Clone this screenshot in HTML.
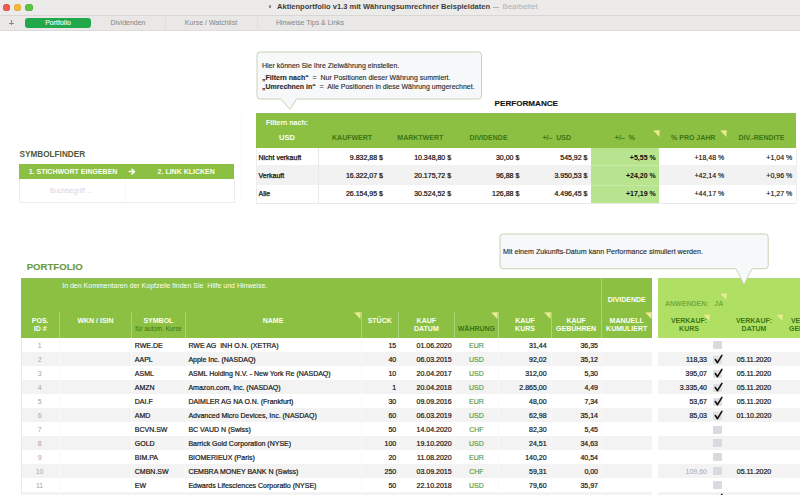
<!DOCTYPE html>
<html><head><meta charset="utf-8"><style>
html,body{margin:0;padding:0;width:800px;height:495px;overflow:hidden;background:#fff;font-family:"Liberation Sans",sans-serif;}
.t{position:absolute;white-space:nowrap;}
.r{position:absolute;}
</style></head><body>
<div class="r" style="left:0px;top:0px;width:800.00px;height:15.00px;background:#ecebe9;"></div>
<div class="r" style="left:0px;top:15px;width:800.00px;height:0.70px;background:#d9d7d5;"></div>
<div class="r" style="left:0px;top:15.7px;width:800.00px;height:14.30px;background:#e9e8e6;"></div>
<div class="r" style="left:0px;top:30px;width:800.00px;height:0.80px;background:#dedcda;"></div>
<div class="r" style="left:2.6999999999999997px;top:3.6px;width:7.2px;height:7.2px;border-radius:50%;background:#ee5b53;box-shadow:inset 0 0 0 0.5px #d8463f"></div>
<div class="r" style="left:14.200000000000001px;top:3.6px;width:7.2px;height:7.2px;border-radius:50%;background:#f6b83a;box-shadow:inset 0 0 0 0.5px #dca02c"></div>
<div class="r" style="left:25.4px;top:3.6px;width:7.2px;height:7.2px;border-radius:50%;background:#5ac544;box-shadow:inset 0 0 0 0.5px #48a935"></div>
<div class="r" style="left:268.6px;top:5.4px;width:2.80px;height:2.80px;background:#8a8a8a;border-radius:0.5px;"></div>
<div class="t" style="left:277px;top:2.47px;font-size:7.55px;line-height:9.06px;font-weight:bold;color:#3c3c3c;">Aktienportfolio v1.3 mit Währungsumrechner Beispieldaten</div>
<div class="r" style="left:493px;top:6.9px;width:6.00px;height:0.90px;background:#b4b4b4;"></div>
<div class="t" style="left:502.5px;top:2.38px;font-size:7.7px;line-height:9.24px;font-weight:normal;color:#b0b0b0;">Bearbeitet</div>
<div class="r" style="left:9.2px;top:22.5px;width:4.60px;height:0.70px;background:#858585;"></div>
<div class="r" style="left:11.15px;top:20.3px;width:0.70px;height:4.90px;background:#858585;"></div>
<div class="r" style="left:25px;top:17.5px;width:66px;height:10.5px;border-radius:3px;background:#22a74b"></div>
<div class="t" style="left:-92px;width:300px;text-align:center;top:18.90px;font-size:7px;line-height:8.40px;font-weight:normal;color:#eaf8ec;-webkit-text-stroke:0.15px #eaf8ec;">Portfolio</div>
<div class="t" style="left:-22px;width:300px;text-align:center;top:19.10px;font-size:7px;line-height:8.40px;font-weight:normal;color:#858585;">Dividenden</div>
<div class="r" style="left:165px;top:17px;width:0.50px;height:12.00px;background:#e0dedc;"></div>
<div class="t" style="left:61px;width:300px;text-align:center;top:19.10px;font-size:7px;line-height:8.40px;font-weight:normal;color:#858585;">Kurse / Watchlist</div>
<div class="r" style="left:257px;top:17px;width:0.50px;height:12.00px;background:#e0dedc;"></div>
<div class="t" style="left:160px;width:300px;text-align:center;top:19.10px;font-size:7px;line-height:8.40px;font-weight:normal;color:#858585;">Hinweise Tips &amp; Links</div>
<svg class="r" style="left:255.5px;top:51px" width="226.5" height="59.5"><path d="M4 1 H222.5 Q225.5 1 225.5 4 V45 Q225.5 48 222.5 48 H40.5 L34.0 58.5 L25.0 48 H4 Q1 48 1 45 V4 Q1 1 4 1 Z" fill="#f7f8fa" stroke="#c6d4b4" stroke-width="1"/></svg>
<div class="t" style="left:262px;top:62.10px;font-size:7px;line-height:8.40px;font-weight:normal;color:#2a2a2a;-webkit-text-stroke:0.12px #2a2a2a;">Hier können Sie Ihre Zielwährung einstellen.</div>
<div class="t" style="left:262px;top:73.70px;font-size:7px;line-height:8.40px;font-weight:normal;color:#2a2a2a;-webkit-text-stroke:0.12px #2a2a2a;"><b>„Filtern nach“</b>&nbsp; =&nbsp; Nur Positionen dieser Währung summiert.</div>
<div class="t" style="left:262px;top:83.10px;font-size:7px;line-height:8.40px;font-weight:normal;color:#2a2a2a;-webkit-text-stroke:0.12px #2a2a2a;"><b>„Umrechnen in“</b>&nbsp; =&nbsp; Alle Positionen in diese Währung umgerechnet.</div>
<div class="t" style="left:494.6px;top:98.74px;font-size:8.1px;line-height:9.72px;font-weight:bold;color:#111;-webkit-text-stroke:0.12px #111;">PERFORMANCE</div>
<div class="r" style="left:256px;top:112.5px;width:539.50px;height:35.80px;background:#8bc043;"></div>
<div class="r" style="left:256px;top:112.5px;width:539.50px;height:1.00px;background:#90b85c;"></div>
<div class="t" style="left:266px;top:118.80px;font-size:7px;line-height:8.40px;font-weight:bold;color:#fbfff5;">Filtern nach:</div>
<div class="t" style="left:137px;width:300px;text-align:center;top:133.30px;font-size:7.5px;line-height:9.00px;font-weight:bold;color:#fbfff5;">USD</div>
<div class="t" style="left:202.10000000000002px;width:300px;text-align:center;top:133.60px;font-size:7px;line-height:8.40px;font-weight:bold;color:#3d7513;">KAUFWERT</div>
<div class="t" style="left:270.29999999999995px;width:300px;text-align:center;top:133.60px;font-size:7px;line-height:8.40px;font-weight:bold;color:#3d7513;">MARKTWERT</div>
<div class="t" style="left:338.5px;width:300px;text-align:center;top:133.60px;font-size:7px;line-height:8.40px;font-weight:bold;color:#3d7513;">DIVIDENDE</div>
<div class="t" style="left:406.70000000000005px;width:300px;text-align:center;top:133.60px;font-size:7px;line-height:8.40px;font-weight:bold;color:#3d7513;">+/–&nbsp; USD</div>
<div class="t" style="left:474.9px;width:300px;text-align:center;top:133.60px;font-size:7px;line-height:8.40px;font-weight:bold;color:#3d7513;">+/–&nbsp; %</div>
<div class="t" style="left:543.25px;width:300px;text-align:center;top:133.60px;font-size:7px;line-height:8.40px;font-weight:bold;color:#3d7513;">% PRO JAHR</div>
<div class="t" style="left:611.5px;width:300px;text-align:center;top:133.60px;font-size:7px;line-height:8.40px;font-weight:bold;color:#3d7513;">DIV.-RENDITE</div>
<svg class="r" style="left:653px;top:129.5px" width="7" height="7"><path d="M0 0.3 L6.7 0 L6.4 7 Z" fill="#eaec90"/><path d="M0 0.3 L6.7 0" stroke="#b4b25a" stroke-width="0.8" opacity="0.6"/></svg>
<svg class="r" style="left:720px;top:129.5px" width="7" height="7"><path d="M0 0.3 L6.7 0 L6.4 7 Z" fill="#eaec90"/><path d="M0 0.3 L6.7 0" stroke="#b4b25a" stroke-width="0.8" opacity="0.6"/></svg>
<div class="r" style="left:256px;top:148.3px;width:539.50px;height:16.70px;background:#ffffff;"></div>
<div class="r" style="left:590.8px;top:148.3px;width:68.20px;height:16.70px;background:#b8e38f;"></div>
<div class="t" style="left:258.5px;top:153.60px;font-size:7px;line-height:8.40px;font-weight:normal;color:#111;-webkit-text-stroke:0.25px #111;">Nicht verkauft</div>
<div class="t" style="right:417.1px;top:153.60px;font-size:7px;line-height:8.40px;font-weight:normal;color:#111;-webkit-text-stroke:0.22px #111;">9.832,88 $</div>
<div class="t" style="right:348.90000000000003px;top:153.60px;font-size:7px;line-height:8.40px;font-weight:normal;color:#111;-webkit-text-stroke:0.22px #111;">10.348,80 $</div>
<div class="t" style="right:280.69999999999993px;top:153.60px;font-size:7px;line-height:8.40px;font-weight:normal;color:#111;-webkit-text-stroke:0.22px #111;">30,00 $</div>
<div class="t" style="right:212.5px;top:153.60px;font-size:7px;line-height:8.40px;font-weight:normal;color:#111;-webkit-text-stroke:0.22px #111;">545,92 $</div>
<div class="t" style="right:144.29999999999995px;top:153.60px;font-size:7px;line-height:8.40px;font-weight:bold;color:#0a0a0a;">+5,55 %</div>
<div class="t" style="right:75.79999999999995px;top:153.60px;font-size:7px;line-height:8.40px;font-weight:normal;color:#111;-webkit-text-stroke:0.15px #111;">+18,48 %</div>
<div class="t" style="right:7.7999999999999545px;top:153.60px;font-size:7px;line-height:8.40px;font-weight:normal;color:#111;-webkit-text-stroke:0.15px #111;">+1,04 %</div>
<div class="r" style="left:256px;top:165.0px;width:539.50px;height:19.80px;background:#f2f2f2;"></div>
<div class="r" style="left:590.8px;top:165.0px;width:68.20px;height:19.80px;background:#b8e38f;"></div>
<div class="t" style="left:258.5px;top:172.20px;font-size:7px;line-height:8.40px;font-weight:normal;color:#111;-webkit-text-stroke:0.25px #111;">Verkauft</div>
<div class="t" style="right:417.1px;top:172.20px;font-size:7px;line-height:8.40px;font-weight:normal;color:#111;-webkit-text-stroke:0.22px #111;">16.322,07 $</div>
<div class="t" style="right:348.90000000000003px;top:172.20px;font-size:7px;line-height:8.40px;font-weight:normal;color:#111;-webkit-text-stroke:0.22px #111;">20.175,72 $</div>
<div class="t" style="right:280.69999999999993px;top:172.20px;font-size:7px;line-height:8.40px;font-weight:normal;color:#111;-webkit-text-stroke:0.22px #111;">96,88 $</div>
<div class="t" style="right:212.5px;top:172.20px;font-size:7px;line-height:8.40px;font-weight:normal;color:#111;-webkit-text-stroke:0.22px #111;">3.950,53 $</div>
<div class="t" style="right:144.29999999999995px;top:172.20px;font-size:7px;line-height:8.40px;font-weight:bold;color:#0a0a0a;">+24,20 %</div>
<div class="t" style="right:75.79999999999995px;top:172.20px;font-size:7px;line-height:8.40px;font-weight:normal;color:#111;-webkit-text-stroke:0.15px #111;">+42,14 %</div>
<div class="t" style="right:7.7999999999999545px;top:172.20px;font-size:7px;line-height:8.40px;font-weight:normal;color:#111;-webkit-text-stroke:0.15px #111;">+0,96 %</div>
<div class="r" style="left:256px;top:184.8px;width:539.50px;height:18.20px;background:#ffffff;"></div>
<div class="r" style="left:590.8px;top:184.8px;width:68.20px;height:18.20px;background:#b8e38f;"></div>
<div class="t" style="left:258.5px;top:190.40px;font-size:7px;line-height:8.40px;font-weight:normal;color:#111;-webkit-text-stroke:0.25px #111;">Alle</div>
<div class="t" style="right:417.1px;top:190.40px;font-size:7px;line-height:8.40px;font-weight:normal;color:#111;-webkit-text-stroke:0.22px #111;">26.154,95 $</div>
<div class="t" style="right:348.90000000000003px;top:190.40px;font-size:7px;line-height:8.40px;font-weight:normal;color:#111;-webkit-text-stroke:0.22px #111;">30.524,52 $</div>
<div class="t" style="right:280.69999999999993px;top:190.40px;font-size:7px;line-height:8.40px;font-weight:normal;color:#111;-webkit-text-stroke:0.22px #111;">126,88 $</div>
<div class="t" style="right:212.5px;top:190.40px;font-size:7px;line-height:8.40px;font-weight:normal;color:#111;-webkit-text-stroke:0.22px #111;">4.496,45 $</div>
<div class="t" style="right:144.29999999999995px;top:190.40px;font-size:7px;line-height:8.40px;font-weight:bold;color:#0a0a0a;">+17,19 %</div>
<div class="t" style="right:75.79999999999995px;top:190.40px;font-size:7px;line-height:8.40px;font-weight:normal;color:#111;-webkit-text-stroke:0.15px #111;">+44,17 %</div>
<div class="t" style="right:7.7999999999999545px;top:190.40px;font-size:7px;line-height:8.40px;font-weight:normal;color:#111;-webkit-text-stroke:0.15px #111;">+1,27 %</div>
<div class="r" style="left:317.6px;top:148.3px;width:0.50px;height:54.70px;background:#e8e8e8;"></div>
<div class="r" style="left:256px;top:203px;width:539.50px;height:0.80px;background:#e9e9e9;"></div>
<div class="r" style="left:255.5px;top:148.3px;width:0.50px;height:55.20px;background:#ededed;"></div>
<div class="r" style="left:795.5px;top:148.3px;width:0.50px;height:55.20px;background:#ededed;"></div>
<div class="r" style="left:591px;top:164.8px;width:68.00px;height:0.50px;background:#c8e9aa;"></div>
<div class="r" style="left:591px;top:184.6px;width:68.00px;height:0.50px;background:#c8e9aa;"></div>
<div class="r" style="left:241px;top:113px;width:0.50px;height:89.00px;background:#f8f8f8;"></div>
<div class="t" style="left:19.6px;top:149.88px;font-size:8.2px;line-height:9.84px;font-weight:bold;color:#4b5a38;">SYMBOLFINDER</div>
<div class="r" style="left:19.3px;top:164px;width:214.70px;height:14.70px;background:#8bc043;"></div>
<div class="t" style="left:28.7px;top:168.20px;font-size:7px;line-height:8.40px;font-weight:bold;color:#fbfff5;">1. STICHWORT EINGEBEN</div>
<svg class="r" style="left:127.8px;top:167.2px" width="10" height="10"><path d="M1.2 4.6 H5.2 M3.9 2.2 L6.5 4.6 L3.9 7" fill="none" stroke="#fbfff5" stroke-width="1.5" stroke-linecap="round" stroke-linejoin="round"/></svg>
<div class="t" style="left:157.6px;top:168.20px;font-size:7px;line-height:8.40px;font-weight:bold;color:#fbfff5;">2. LINK KLICKEN</div>
<div class="r" style="left:19.3px;top:178.7px;width:214.2px;height:23.1px;border:0.5px solid #ececec;border-top:none;background:#fff"></div>
<div class="r" style="left:125.2px;top:178.7px;width:0.50px;height:22.80px;background:#f8f8f8;"></div>
<div class="t" style="left:49.7px;top:187.10px;font-size:7px;line-height:8.40px;font-weight:normal;color:#d6d6dc;">Buchbegriff ...</div>
<div class="t" style="left:26.7px;top:261.24px;font-size:9.6px;line-height:11.52px;font-weight:bold;color:#6b9a3e;-webkit-text-stroke:0.12px #6b9a3e;">PORTFOLIO</div>
<div class="r" style="left:20.9px;top:278.2px;width:631.50px;height:60.20px;background:#8bc043;"></div>
<div class="r" style="left:658.4px;top:278.2px;width:141.60px;height:60.20px;background:#afe063;"></div>
<div class="r" style="left:20.9px;top:278.2px;width:631.50px;height:0.80px;background:#93bb5e;"></div>
<div class="r" style="left:658.4px;top:278.2px;width:141.60px;height:0.80px;background:#b0d77a;"></div>
<div class="t" style="left:62.2px;top:282.20px;font-size:7px;line-height:8.40px;font-weight:normal;color:#fbfff5;">In den Kommentaren der Kopfzeile finden Sie&nbsp; Hilfe und Hinweise.</div>
<div class="r" style="left:59.25px;top:312px;width:0.50px;height:26.40px;background:#a8d67a;"></div>
<div class="r" style="left:131.25px;top:312px;width:0.50px;height:26.40px;background:#a8d67a;"></div>
<div class="r" style="left:185.05px;top:312px;width:0.50px;height:26.40px;background:#a8d67a;"></div>
<div class="r" style="left:360.55px;top:312px;width:0.50px;height:26.40px;background:#a8d67a;"></div>
<div class="r" style="left:398.35px;top:312px;width:0.50px;height:26.40px;background:#a8d67a;"></div>
<div class="r" style="left:453.85px;top:312px;width:0.50px;height:26.40px;background:#a8d67a;"></div>
<div class="r" style="left:498.45px;top:312px;width:0.50px;height:26.40px;background:#a8d67a;"></div>
<div class="r" style="left:551.05px;top:312px;width:0.50px;height:26.40px;background:#a8d67a;"></div>
<div class="r" style="left:600.75px;top:278.2px;width:0.50px;height:60.20px;background:#a8d67a;"></div>
<div class="t" style="left:-109.8px;width:300px;text-align:center;top:317.10px;font-size:7px;line-height:8.40px;font-weight:bold;color:#fbfff5;">POS.</div>
<div class="t" style="left:-109.8px;width:300px;text-align:center;top:325.00px;font-size:7px;line-height:8.40px;font-weight:bold;color:#fbfff5;">ID #</div>
<div class="t" style="left:-54.5px;width:300px;text-align:center;top:317.10px;font-size:7px;line-height:8.40px;font-weight:bold;color:#fbfff5;">WKN / ISIN</div>
<div class="t" style="left:8.400000000000006px;width:300px;text-align:center;top:317.10px;font-size:7px;line-height:8.40px;font-weight:bold;color:#fbfff5;">SYMBOL</div>
<div class="t" style="left:8.599999999999994px;width:300px;text-align:center;top:325.42px;font-size:6.3px;line-height:7.56px;font-weight:normal;color:#3d7513;">für autom. Kurse</div>
<div class="t" style="left:123.05000000000001px;width:300px;text-align:center;top:317.10px;font-size:7px;line-height:8.40px;font-weight:bold;color:#fbfff5;">NAME</div>
<div class="t" style="left:229.70000000000005px;width:300px;text-align:center;top:317.10px;font-size:7px;line-height:8.40px;font-weight:bold;color:#fbfff5;">STÜCK</div>
<div class="t" style="left:276.35px;width:300px;text-align:center;top:317.10px;font-size:7px;line-height:8.40px;font-weight:bold;color:#fbfff5;">KAUF</div>
<div class="t" style="left:276.35px;width:300px;text-align:center;top:325.00px;font-size:7px;line-height:8.40px;font-weight:bold;color:#fbfff5;">DATUM</div>
<div class="t" style="left:326.4px;width:300px;text-align:center;top:325.00px;font-size:7px;line-height:8.40px;font-weight:bold;color:#3d7513;">WÄHRUNG</div>
<div class="t" style="left:375.0px;width:300px;text-align:center;top:317.10px;font-size:7px;line-height:8.40px;font-weight:bold;color:#fbfff5;">KAUF</div>
<div class="t" style="left:375.0px;width:300px;text-align:center;top:325.00px;font-size:7px;line-height:8.40px;font-weight:bold;color:#fbfff5;">KURS</div>
<div class="t" style="left:426.15px;width:300px;text-align:center;top:317.10px;font-size:7px;line-height:8.40px;font-weight:bold;color:#fbfff5;">KAUF</div>
<div class="t" style="left:426.15px;width:300px;text-align:center;top:325.00px;font-size:7px;line-height:8.40px;font-weight:bold;color:#fbfff5;">GEBÜHREN</div>
<div class="t" style="left:476.70000000000005px;width:300px;text-align:center;top:296.10px;font-size:7px;line-height:8.40px;font-weight:bold;color:#fbfff5;">DIVIDENDE</div>
<div class="t" style="left:476.70000000000005px;width:300px;text-align:center;top:317.10px;font-size:7px;line-height:8.40px;font-weight:bold;color:#fbfff5;">MANUELL</div>
<div class="t" style="left:476.70000000000005px;width:300px;text-align:center;top:325.00px;font-size:7px;line-height:8.40px;font-weight:bold;color:#fbfff5;">KUMULIERT</div>
<svg class="r" style="left:353.5px;top:312.3px" width="7" height="7"><path d="M0 0.3 L6.7 0 L6.4 7 Z" fill="#eaec90"/><path d="M0 0.3 L6.7 0" stroke="#b4b25a" stroke-width="0.8" opacity="0.6"/></svg>
<svg class="r" style="left:490.8px;top:312.3px" width="7" height="7"><path d="M0 0.3 L6.7 0 L6.4 7 Z" fill="#eaec90"/><path d="M0 0.3 L6.7 0" stroke="#b4b25a" stroke-width="0.8" opacity="0.6"/></svg>
<svg class="r" style="left:543.5px;top:312.3px" width="7" height="7"><path d="M0 0.3 L6.7 0 L6.4 7 Z" fill="#eaec90"/><path d="M0 0.3 L6.7 0" stroke="#b4b25a" stroke-width="0.8" opacity="0.6"/></svg>
<svg class="r" style="left:645px;top:312.3px" width="7" height="7"><path d="M0 0.3 L6.7 0 L6.4 7 Z" fill="#eaec90"/><path d="M0 0.3 L6.7 0" stroke="#b4b25a" stroke-width="0.8" opacity="0.6"/></svg>
<div class="t" style="left:665px;top:299.60px;font-size:7px;line-height:8.40px;font-weight:bold;color:#72ac3e;">ANWENDEN:</div>
<div class="t" style="left:714.3px;top:299.60px;font-size:7px;line-height:8.40px;font-weight:bold;color:#72ac3e;">JA</div>
<svg class="r" style="left:719.5px;top:293px" width="7" height="7"><path d="M0 0.3 L6.7 0 L6.4 7 Z" fill="#eaec90"/><path d="M0 0.3 L6.7 0" stroke="#b4b25a" stroke-width="0.8" opacity="0.6"/></svg>
<div class="t" style="left:539px;width:300px;text-align:center;top:317.10px;font-size:7px;line-height:8.40px;font-weight:bold;color:#3d7513;">VERKAUF:</div>
<div class="t" style="left:539px;width:300px;text-align:center;top:325.00px;font-size:7px;line-height:8.40px;font-weight:bold;color:#3d7513;">KURS</div>
<div class="t" style="left:604px;width:300px;text-align:center;top:317.10px;font-size:7px;line-height:8.40px;font-weight:bold;color:#3d7513;">VERKAUF:</div>
<div class="t" style="left:604px;width:300px;text-align:center;top:325.00px;font-size:7px;line-height:8.40px;font-weight:bold;color:#3d7513;">DATUM</div>
<div class="t" style="left:659px;width:300px;text-align:center;top:317.10px;font-size:7px;line-height:8.40px;font-weight:bold;color:#3d7513;">VERKAUF:</div>
<div class="t" style="left:659px;width:300px;text-align:center;top:325.00px;font-size:7px;line-height:8.40px;font-weight:bold;color:#3d7513;">GEBÜHREN</div>
<svg class="r" style="left:703px;top:313.5px" width="7" height="7"><path d="M0 0.3 L6.7 0 L6.4 7 Z" fill="#eaec90"/><path d="M0 0.3 L6.7 0" stroke="#b4b25a" stroke-width="0.8" opacity="0.6"/></svg>
<svg class="r" style="left:776px;top:313.5px" width="7" height="7"><path d="M0 0.3 L6.7 0 L6.4 7 Z" fill="#eaec90"/><path d="M0 0.3 L6.7 0" stroke="#b4b25a" stroke-width="0.8" opacity="0.6"/></svg>
<div class="t" style="left:-110.4px;width:300px;text-align:center;top:341.60px;font-size:7px;line-height:8.40px;font-weight:normal;color:#a4a4a4;">1</div>
<div class="t" style="left:134.8px;top:341.60px;font-size:7px;line-height:8.40px;font-weight:normal;color:#161616;-webkit-text-stroke:0.2px #161616;">RWE.DE</div>
<div class="t" style="left:188.4px;top:341.60px;font-size:7px;line-height:8.40px;font-weight:normal;color:#161616;-webkit-text-stroke:0.2px #161616;">RWE AG&nbsp; INH O.N. (XETRA)</div>
<div class="t" style="right:403.8px;top:341.60px;font-size:7px;line-height:8.40px;font-weight:normal;color:#161616;-webkit-text-stroke:0.2px #161616;">15</div>
<div class="t" style="right:348.4px;top:341.60px;font-size:7px;line-height:8.40px;font-weight:normal;color:#161616;-webkit-text-stroke:0.2px #161616;">01.06.2020</div>
<div class="t" style="left:326.4px;width:300px;text-align:center;top:341.60px;font-size:7px;line-height:8.40px;font-weight:normal;color:#5c9936;-webkit-text-stroke:0.15px #5c9936;">EUR</div>
<div class="t" style="right:253.39999999999998px;top:341.60px;font-size:7px;line-height:8.40px;font-weight:normal;color:#161616;-webkit-text-stroke:0.2px #161616;">31,44</div>
<div class="t" style="right:202px;top:341.60px;font-size:7px;line-height:8.40px;font-weight:normal;color:#161616;-webkit-text-stroke:0.2px #161616;">36,35</div>
<div class="r" style="left:713.1px;top:341.20px;width:8.5px;height:8px;border-radius:1px;background:#d8dae0"></div>
<div class="r" style="left:20.9px;top:351.5px;width:631.50px;height:14.80px;background:#f3f3f3;"></div>
<div class="r" style="left:658.4px;top:351.5px;width:141.60px;height:14.80px;background:#f3f3f3;"></div>
<div class="t" style="left:-110.4px;width:300px;text-align:center;top:356.30px;font-size:7px;line-height:8.40px;font-weight:normal;color:#a4a4a4;">2</div>
<div class="t" style="left:134.8px;top:356.30px;font-size:7px;line-height:8.40px;font-weight:normal;color:#161616;-webkit-text-stroke:0.2px #161616;">AAPL</div>
<div class="t" style="left:188.4px;top:356.30px;font-size:7px;line-height:8.40px;font-weight:normal;color:#161616;-webkit-text-stroke:0.2px #161616;">Apple Inc. (NASDAQ)</div>
<div class="t" style="right:403.8px;top:356.30px;font-size:7px;line-height:8.40px;font-weight:normal;color:#161616;-webkit-text-stroke:0.2px #161616;">40</div>
<div class="t" style="right:348.4px;top:356.30px;font-size:7px;line-height:8.40px;font-weight:normal;color:#161616;-webkit-text-stroke:0.2px #161616;">06.03.2015</div>
<div class="t" style="left:326.4px;width:300px;text-align:center;top:356.30px;font-size:7px;line-height:8.40px;font-weight:normal;color:#5c9936;-webkit-text-stroke:0.15px #5c9936;">USD</div>
<div class="t" style="right:253.39999999999998px;top:356.30px;font-size:7px;line-height:8.40px;font-weight:normal;color:#161616;-webkit-text-stroke:0.2px #161616;">92,02</div>
<div class="t" style="right:202px;top:356.30px;font-size:7px;line-height:8.40px;font-weight:normal;color:#161616;-webkit-text-stroke:0.2px #161616;">35,12</div>
<div class="t" style="right:93px;top:356.30px;font-size:7px;line-height:8.40px;font-weight:normal;color:#161616;-webkit-text-stroke:0.2px #161616;">118,33</div>
<div class="t" style="left:604px;width:300px;text-align:center;top:356.30px;font-size:7px;line-height:8.40px;font-weight:normal;color:#161616;-webkit-text-stroke:0.2px #161616;">05.11.2020</div>
<div class="r" style="left:713.1px;top:355.90px;width:8.5px;height:8px;border-radius:1px;background:#e0e0e2"></div>
<svg class="r" style="left:711px;top:352.90px" width="14" height="14"><path d="M4.3 6.5 L6.5 9.7 L10.9 2.3" fill="none" stroke="#0d0d0d" stroke-width="1.55" stroke-linecap="round" stroke-linejoin="round"/></svg>
<div class="t" style="left:-110.4px;width:300px;text-align:center;top:370.23px;font-size:7px;line-height:8.40px;font-weight:normal;color:#a4a4a4;">3</div>
<div class="t" style="left:134.8px;top:370.23px;font-size:7px;line-height:8.40px;font-weight:normal;color:#161616;-webkit-text-stroke:0.2px #161616;">ASML</div>
<div class="t" style="left:188.4px;top:370.23px;font-size:7px;line-height:8.40px;font-weight:normal;color:#161616;-webkit-text-stroke:0.2px #161616;">ASML Holding N.V. - New York Re (NASDAQ)</div>
<div class="t" style="right:403.8px;top:370.23px;font-size:7px;line-height:8.40px;font-weight:normal;color:#161616;-webkit-text-stroke:0.2px #161616;">10</div>
<div class="t" style="right:348.4px;top:370.23px;font-size:7px;line-height:8.40px;font-weight:normal;color:#161616;-webkit-text-stroke:0.2px #161616;">20.04.2017</div>
<div class="t" style="left:326.4px;width:300px;text-align:center;top:370.23px;font-size:7px;line-height:8.40px;font-weight:normal;color:#5c9936;-webkit-text-stroke:0.15px #5c9936;">USD</div>
<div class="t" style="right:253.39999999999998px;top:370.23px;font-size:7px;line-height:8.40px;font-weight:normal;color:#161616;-webkit-text-stroke:0.2px #161616;">312,00</div>
<div class="t" style="right:202px;top:370.23px;font-size:7px;line-height:8.40px;font-weight:normal;color:#161616;-webkit-text-stroke:0.2px #161616;">5,30</div>
<div class="t" style="right:93px;top:370.23px;font-size:7px;line-height:8.40px;font-weight:normal;color:#161616;-webkit-text-stroke:0.2px #161616;">395,07</div>
<div class="t" style="left:604px;width:300px;text-align:center;top:370.23px;font-size:7px;line-height:8.40px;font-weight:normal;color:#161616;-webkit-text-stroke:0.2px #161616;">05.11.2020</div>
<div class="r" style="left:713.1px;top:369.83px;width:8.5px;height:8px;border-radius:1px;background:#e0e0e2"></div>
<svg class="r" style="left:711px;top:366.83px" width="14" height="14"><path d="M4.3 6.5 L6.5 9.7 L10.9 2.3" fill="none" stroke="#0d0d0d" stroke-width="1.55" stroke-linecap="round" stroke-linejoin="round"/></svg>
<div class="r" style="left:20.9px;top:379.54px;width:631.50px;height:14.80px;background:#f3f3f3;"></div>
<div class="r" style="left:658.4px;top:379.54px;width:141.60px;height:14.80px;background:#f3f3f3;"></div>
<div class="t" style="left:-110.4px;width:300px;text-align:center;top:384.16px;font-size:7px;line-height:8.40px;font-weight:normal;color:#a4a4a4;">4</div>
<div class="t" style="left:134.8px;top:384.16px;font-size:7px;line-height:8.40px;font-weight:normal;color:#161616;-webkit-text-stroke:0.2px #161616;">AMZN</div>
<div class="t" style="left:188.4px;top:384.16px;font-size:7px;line-height:8.40px;font-weight:normal;color:#161616;-webkit-text-stroke:0.2px #161616;">Amazon.com, Inc. (NASDAQ)</div>
<div class="t" style="right:403.8px;top:384.16px;font-size:7px;line-height:8.40px;font-weight:normal;color:#161616;-webkit-text-stroke:0.2px #161616;">1</div>
<div class="t" style="right:348.4px;top:384.16px;font-size:7px;line-height:8.40px;font-weight:normal;color:#161616;-webkit-text-stroke:0.2px #161616;">20.04.2018</div>
<div class="t" style="left:326.4px;width:300px;text-align:center;top:384.16px;font-size:7px;line-height:8.40px;font-weight:normal;color:#5c9936;-webkit-text-stroke:0.15px #5c9936;">USD</div>
<div class="t" style="right:253.39999999999998px;top:384.16px;font-size:7px;line-height:8.40px;font-weight:normal;color:#161616;-webkit-text-stroke:0.2px #161616;">2.865,00</div>
<div class="t" style="right:202px;top:384.16px;font-size:7px;line-height:8.40px;font-weight:normal;color:#161616;-webkit-text-stroke:0.2px #161616;">4,49</div>
<div class="t" style="right:93px;top:384.16px;font-size:7px;line-height:8.40px;font-weight:normal;color:#161616;-webkit-text-stroke:0.2px #161616;">3.335,40</div>
<div class="t" style="left:604px;width:300px;text-align:center;top:384.16px;font-size:7px;line-height:8.40px;font-weight:normal;color:#161616;-webkit-text-stroke:0.2px #161616;">05.11.2020</div>
<div class="r" style="left:713.1px;top:383.76px;width:8.5px;height:8px;border-radius:1px;background:#e0e0e2"></div>
<svg class="r" style="left:711px;top:380.76px" width="14" height="14"><path d="M4.3 6.5 L6.5 9.7 L10.9 2.3" fill="none" stroke="#0d0d0d" stroke-width="1.55" stroke-linecap="round" stroke-linejoin="round"/></svg>
<div class="t" style="left:-110.4px;width:300px;text-align:center;top:398.09px;font-size:7px;line-height:8.40px;font-weight:normal;color:#a4a4a4;">5</div>
<div class="t" style="left:134.8px;top:398.09px;font-size:7px;line-height:8.40px;font-weight:normal;color:#161616;-webkit-text-stroke:0.2px #161616;">DAI.F</div>
<div class="t" style="left:188.4px;top:398.09px;font-size:7px;line-height:8.40px;font-weight:normal;color:#161616;-webkit-text-stroke:0.2px #161616;">DAIMLER AG NA O.N. (Frankfurt)</div>
<div class="t" style="right:403.8px;top:398.09px;font-size:7px;line-height:8.40px;font-weight:normal;color:#161616;-webkit-text-stroke:0.2px #161616;">30</div>
<div class="t" style="right:348.4px;top:398.09px;font-size:7px;line-height:8.40px;font-weight:normal;color:#161616;-webkit-text-stroke:0.2px #161616;">09.09.2016</div>
<div class="t" style="left:326.4px;width:300px;text-align:center;top:398.09px;font-size:7px;line-height:8.40px;font-weight:normal;color:#5c9936;-webkit-text-stroke:0.15px #5c9936;">EUR</div>
<div class="t" style="right:253.39999999999998px;top:398.09px;font-size:7px;line-height:8.40px;font-weight:normal;color:#161616;-webkit-text-stroke:0.2px #161616;">48,00</div>
<div class="t" style="right:202px;top:398.09px;font-size:7px;line-height:8.40px;font-weight:normal;color:#161616;-webkit-text-stroke:0.2px #161616;">7,34</div>
<div class="t" style="right:93px;top:398.09px;font-size:7px;line-height:8.40px;font-weight:normal;color:#161616;-webkit-text-stroke:0.2px #161616;">53,67</div>
<div class="t" style="left:604px;width:300px;text-align:center;top:398.09px;font-size:7px;line-height:8.40px;font-weight:normal;color:#161616;-webkit-text-stroke:0.2px #161616;">05.11.2020</div>
<div class="r" style="left:713.1px;top:397.69px;width:8.5px;height:8px;border-radius:1px;background:#e0e0e2"></div>
<svg class="r" style="left:711px;top:394.69px" width="14" height="14"><path d="M4.3 6.5 L6.5 9.7 L10.9 2.3" fill="none" stroke="#0d0d0d" stroke-width="1.55" stroke-linecap="round" stroke-linejoin="round"/></svg>
<div class="r" style="left:20.9px;top:407.58px;width:631.50px;height:14.80px;background:#f3f3f3;"></div>
<div class="r" style="left:658.4px;top:407.58px;width:141.60px;height:14.80px;background:#f3f3f3;"></div>
<div class="t" style="left:-110.4px;width:300px;text-align:center;top:412.02px;font-size:7px;line-height:8.40px;font-weight:normal;color:#a4a4a4;">6</div>
<div class="t" style="left:134.8px;top:412.02px;font-size:7px;line-height:8.40px;font-weight:normal;color:#161616;-webkit-text-stroke:0.2px #161616;">AMD</div>
<div class="t" style="left:188.4px;top:412.02px;font-size:7px;line-height:8.40px;font-weight:normal;color:#161616;-webkit-text-stroke:0.2px #161616;">Advanced Micro Devices, Inc. (NASDAQ)</div>
<div class="t" style="right:403.8px;top:412.02px;font-size:7px;line-height:8.40px;font-weight:normal;color:#161616;-webkit-text-stroke:0.2px #161616;">60</div>
<div class="t" style="right:348.4px;top:412.02px;font-size:7px;line-height:8.40px;font-weight:normal;color:#161616;-webkit-text-stroke:0.2px #161616;">06.03.2019</div>
<div class="t" style="left:326.4px;width:300px;text-align:center;top:412.02px;font-size:7px;line-height:8.40px;font-weight:normal;color:#5c9936;-webkit-text-stroke:0.15px #5c9936;">USD</div>
<div class="t" style="right:253.39999999999998px;top:412.02px;font-size:7px;line-height:8.40px;font-weight:normal;color:#161616;-webkit-text-stroke:0.2px #161616;">62,98</div>
<div class="t" style="right:202px;top:412.02px;font-size:7px;line-height:8.40px;font-weight:normal;color:#161616;-webkit-text-stroke:0.2px #161616;">35,14</div>
<div class="t" style="right:93px;top:412.02px;font-size:7px;line-height:8.40px;font-weight:normal;color:#161616;-webkit-text-stroke:0.2px #161616;">85,03</div>
<div class="t" style="left:604px;width:300px;text-align:center;top:412.02px;font-size:7px;line-height:8.40px;font-weight:normal;color:#161616;-webkit-text-stroke:0.2px #161616;">01.10.2020</div>
<div class="r" style="left:713.1px;top:411.62px;width:8.5px;height:8px;border-radius:1px;background:#e0e0e2"></div>
<svg class="r" style="left:711px;top:408.62px" width="14" height="14"><path d="M4.3 6.5 L6.5 9.7 L10.9 2.3" fill="none" stroke="#0d0d0d" stroke-width="1.55" stroke-linecap="round" stroke-linejoin="round"/></svg>
<div class="t" style="left:-110.4px;width:300px;text-align:center;top:425.95px;font-size:7px;line-height:8.40px;font-weight:normal;color:#a4a4a4;">7</div>
<div class="t" style="left:134.8px;top:425.95px;font-size:7px;line-height:8.40px;font-weight:normal;color:#161616;-webkit-text-stroke:0.2px #161616;">BCVN.SW</div>
<div class="t" style="left:188.4px;top:425.95px;font-size:7px;line-height:8.40px;font-weight:normal;color:#161616;-webkit-text-stroke:0.2px #161616;">BC VAUD N (Swiss)</div>
<div class="t" style="right:403.8px;top:425.95px;font-size:7px;line-height:8.40px;font-weight:normal;color:#161616;-webkit-text-stroke:0.2px #161616;">50</div>
<div class="t" style="right:348.4px;top:425.95px;font-size:7px;line-height:8.40px;font-weight:normal;color:#161616;-webkit-text-stroke:0.2px #161616;">14.04.2020</div>
<div class="t" style="left:326.4px;width:300px;text-align:center;top:425.95px;font-size:7px;line-height:8.40px;font-weight:normal;color:#5c9936;-webkit-text-stroke:0.15px #5c9936;">CHF</div>
<div class="t" style="right:253.39999999999998px;top:425.95px;font-size:7px;line-height:8.40px;font-weight:normal;color:#161616;-webkit-text-stroke:0.2px #161616;">82,30</div>
<div class="t" style="right:202px;top:425.95px;font-size:7px;line-height:8.40px;font-weight:normal;color:#161616;-webkit-text-stroke:0.2px #161616;">5,45</div>
<div class="r" style="left:713.1px;top:425.55px;width:8.5px;height:8px;border-radius:1px;background:#d8dae0"></div>
<div class="r" style="left:20.9px;top:435.62px;width:631.50px;height:14.80px;background:#f3f3f3;"></div>
<div class="r" style="left:658.4px;top:435.62px;width:141.60px;height:14.80px;background:#f3f3f3;"></div>
<div class="t" style="left:-110.4px;width:300px;text-align:center;top:439.88px;font-size:7px;line-height:8.40px;font-weight:normal;color:#a4a4a4;">8</div>
<div class="t" style="left:134.8px;top:439.88px;font-size:7px;line-height:8.40px;font-weight:normal;color:#161616;-webkit-text-stroke:0.2px #161616;">GOLD</div>
<div class="t" style="left:188.4px;top:439.88px;font-size:7px;line-height:8.40px;font-weight:normal;color:#161616;-webkit-text-stroke:0.2px #161616;">Barrick Gold Corporation (NYSE)</div>
<div class="t" style="right:403.8px;top:439.88px;font-size:7px;line-height:8.40px;font-weight:normal;color:#161616;-webkit-text-stroke:0.2px #161616;">100</div>
<div class="t" style="right:348.4px;top:439.88px;font-size:7px;line-height:8.40px;font-weight:normal;color:#161616;-webkit-text-stroke:0.2px #161616;">19.10.2020</div>
<div class="t" style="left:326.4px;width:300px;text-align:center;top:439.88px;font-size:7px;line-height:8.40px;font-weight:normal;color:#5c9936;-webkit-text-stroke:0.15px #5c9936;">USD</div>
<div class="t" style="right:253.39999999999998px;top:439.88px;font-size:7px;line-height:8.40px;font-weight:normal;color:#161616;-webkit-text-stroke:0.2px #161616;">24,51</div>
<div class="t" style="right:202px;top:439.88px;font-size:7px;line-height:8.40px;font-weight:normal;color:#161616;-webkit-text-stroke:0.2px #161616;">34,63</div>
<div class="r" style="left:713.1px;top:439.48px;width:8.5px;height:8px;border-radius:1px;background:#d8dae0"></div>
<div class="t" style="left:-110.4px;width:300px;text-align:center;top:453.81px;font-size:7px;line-height:8.40px;font-weight:normal;color:#a4a4a4;">9</div>
<div class="t" style="left:134.8px;top:453.81px;font-size:7px;line-height:8.40px;font-weight:normal;color:#161616;-webkit-text-stroke:0.2px #161616;">BIM.PA</div>
<div class="t" style="left:188.4px;top:453.81px;font-size:7px;line-height:8.40px;font-weight:normal;color:#161616;-webkit-text-stroke:0.2px #161616;">BIOMERIEUX (Paris)</div>
<div class="t" style="right:403.8px;top:453.81px;font-size:7px;line-height:8.40px;font-weight:normal;color:#161616;-webkit-text-stroke:0.2px #161616;">20</div>
<div class="t" style="right:348.4px;top:453.81px;font-size:7px;line-height:8.40px;font-weight:normal;color:#161616;-webkit-text-stroke:0.2px #161616;">11.08.2020</div>
<div class="t" style="left:326.4px;width:300px;text-align:center;top:453.81px;font-size:7px;line-height:8.40px;font-weight:normal;color:#5c9936;-webkit-text-stroke:0.15px #5c9936;">EUR</div>
<div class="t" style="right:253.39999999999998px;top:453.81px;font-size:7px;line-height:8.40px;font-weight:normal;color:#161616;-webkit-text-stroke:0.2px #161616;">140,20</div>
<div class="t" style="right:202px;top:453.81px;font-size:7px;line-height:8.40px;font-weight:normal;color:#161616;-webkit-text-stroke:0.2px #161616;">40,54</div>
<div class="r" style="left:713.1px;top:453.41px;width:8.5px;height:8px;border-radius:1px;background:#d8dae0"></div>
<div class="r" style="left:20.9px;top:463.65999999999997px;width:631.50px;height:14.80px;background:#f3f3f3;"></div>
<div class="r" style="left:658.4px;top:463.65999999999997px;width:141.60px;height:14.80px;background:#f3f3f3;"></div>
<div class="t" style="left:-110.4px;width:300px;text-align:center;top:467.74px;font-size:7px;line-height:8.40px;font-weight:normal;color:#a4a4a4;">10</div>
<div class="t" style="left:134.8px;top:467.74px;font-size:7px;line-height:8.40px;font-weight:normal;color:#161616;-webkit-text-stroke:0.2px #161616;">CMBN.SW</div>
<div class="t" style="left:188.4px;top:467.74px;font-size:7px;line-height:8.40px;font-weight:normal;color:#161616;-webkit-text-stroke:0.2px #161616;">CEMBRA MONEY BANK N (Swiss)</div>
<div class="t" style="right:403.8px;top:467.74px;font-size:7px;line-height:8.40px;font-weight:normal;color:#161616;-webkit-text-stroke:0.2px #161616;">250</div>
<div class="t" style="right:348.4px;top:467.74px;font-size:7px;line-height:8.40px;font-weight:normal;color:#161616;-webkit-text-stroke:0.2px #161616;">03.09.2015</div>
<div class="t" style="left:326.4px;width:300px;text-align:center;top:467.74px;font-size:7px;line-height:8.40px;font-weight:normal;color:#5c9936;-webkit-text-stroke:0.15px #5c9936;">CHF</div>
<div class="t" style="right:253.39999999999998px;top:467.74px;font-size:7px;line-height:8.40px;font-weight:normal;color:#161616;-webkit-text-stroke:0.2px #161616;">59,31</div>
<div class="t" style="right:202px;top:467.74px;font-size:7px;line-height:8.40px;font-weight:normal;color:#161616;-webkit-text-stroke:0.2px #161616;">0,00</div>
<div class="t" style="right:93px;top:467.74px;font-size:7px;line-height:8.40px;font-weight:normal;color:#a8a8a8;">109,60</div>
<div class="t" style="left:604px;width:300px;text-align:center;top:467.74px;font-size:7px;line-height:8.40px;font-weight:normal;color:#161616;-webkit-text-stroke:0.2px #161616;">05.11.2020</div>
<div class="r" style="left:713.1px;top:467.34px;width:8.5px;height:8px;border-radius:1px;background:#d8dae0"></div>
<div class="t" style="left:-110.4px;width:300px;text-align:center;top:481.67px;font-size:7px;line-height:8.40px;font-weight:normal;color:#a4a4a4;">11</div>
<div class="t" style="left:134.8px;top:481.67px;font-size:7px;line-height:8.40px;font-weight:normal;color:#161616;-webkit-text-stroke:0.2px #161616;">EW</div>
<div class="t" style="left:188.4px;top:481.67px;font-size:7px;line-height:8.40px;font-weight:normal;color:#161616;-webkit-text-stroke:0.2px #161616;">Edwards Lifesciences Corporatio (NYSE)</div>
<div class="t" style="right:403.8px;top:481.67px;font-size:7px;line-height:8.40px;font-weight:normal;color:#161616;-webkit-text-stroke:0.2px #161616;">50</div>
<div class="t" style="right:348.4px;top:481.67px;font-size:7px;line-height:8.40px;font-weight:normal;color:#161616;-webkit-text-stroke:0.2px #161616;">22.10.2018</div>
<div class="t" style="left:326.4px;width:300px;text-align:center;top:481.67px;font-size:7px;line-height:8.40px;font-weight:normal;color:#5c9936;-webkit-text-stroke:0.15px #5c9936;">USD</div>
<div class="t" style="right:253.39999999999998px;top:481.67px;font-size:7px;line-height:8.40px;font-weight:normal;color:#161616;-webkit-text-stroke:0.2px #161616;">79,60</div>
<div class="t" style="right:202px;top:481.67px;font-size:7px;line-height:8.40px;font-weight:normal;color:#161616;-webkit-text-stroke:0.2px #161616;">35,97</div>
<div class="r" style="left:713.1px;top:481.27px;width:8.5px;height:8px;border-radius:1px;background:#d8dae0"></div>
<div class="r" style="left:20.9px;top:491.7px;width:631.50px;height:14.80px;background:#f3f3f3;"></div>
<div class="r" style="left:658.4px;top:491.7px;width:141.60px;height:14.80px;background:#f3f3f3;"></div>
<div class="r" style="left:713.1px;top:495.20px;width:8.5px;height:8px;border-radius:1px;background:#e0e0e2"></div>
<svg class="r" style="left:711px;top:492.20px" width="14" height="14"><path d="M4.3 6.5 L6.5 9.7 L10.9 2.3" fill="none" stroke="#0d0d0d" stroke-width="1.55" stroke-linecap="round" stroke-linejoin="round"/></svg>
<div class="r" style="left:59.25px;top:338.4px;width:0.50px;height:156.60px;background:#f9f9f9;"></div>
<div class="r" style="left:131.25px;top:338.4px;width:0.50px;height:156.60px;background:#f9f9f9;"></div>
<div class="r" style="left:185.05px;top:338.4px;width:0.50px;height:156.60px;background:#f9f9f9;"></div>
<div class="r" style="left:360.55px;top:338.4px;width:0.50px;height:156.60px;background:#f9f9f9;"></div>
<div class="r" style="left:398.35px;top:338.4px;width:0.50px;height:156.60px;background:#f9f9f9;"></div>
<div class="r" style="left:453.85px;top:338.4px;width:0.50px;height:156.60px;background:#f9f9f9;"></div>
<div class="r" style="left:498.45px;top:338.4px;width:0.50px;height:156.60px;background:#f9f9f9;"></div>
<div class="r" style="left:551.05px;top:338.4px;width:0.50px;height:156.60px;background:#f9f9f9;"></div>
<div class="r" style="left:600.75px;top:338.4px;width:0.50px;height:156.60px;background:#f9f9f9;"></div>
<div class="r" style="left:20.5px;top:338.4px;width:0.50px;height:156.60px;background:#e8e8e8;"></div>
<svg class="r" style="left:499px;top:232.5px" width="270.20000000000005" height="52.5"><path d="M4 1 H266.20000000000005 Q269.20000000000005 1 269.20000000000005 4 V32.69999999999999 Q269.20000000000005 35.69999999999999 266.20000000000005 35.69999999999999 H253 L245 51.5 L237 35.69999999999999 H4 Q1 35.69999999999999 1 32.69999999999999 V4 Q1 1 4 1 Z" fill="#f7f8fa" stroke="#c6d4b4" stroke-width="1"/></svg>
<div class="t" style="left:503px;top:247.91px;font-size:7.15px;line-height:8.58px;font-weight:normal;color:#2a2a2a;-webkit-text-stroke:0.12px #2a2a2a;">Mit einem Zukunfts-Datum kann Performance simuliert werden.</div>
</body></html>
